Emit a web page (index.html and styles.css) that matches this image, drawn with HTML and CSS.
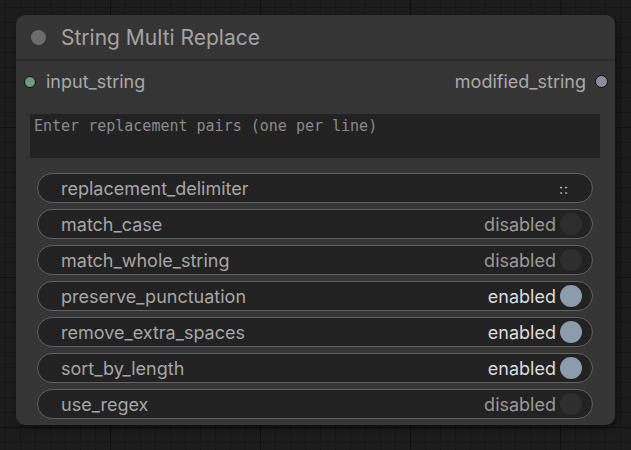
FILE: index.html
```html
<!DOCTYPE html>
<html lang="en">
<head>
  <meta charset="UTF-8">
  <title>String Multi Replace</title>
  <link rel="stylesheet" href="styles.css">
</head>
<body>
  <div class="node">
    <div class="node-title">
      <span class="title-dot"></span>
      <span class="title-text">String Multi Replace</span>
    </div>
    <div class="slots">
      <div class="slot slot-in">
        <span class="slot-dot in"></span>
        <span>input_string</span>
      </div>
      <div class="slot slot-out">
        <span>modified_string</span>
        <span class="slot-dot out"></span>
      </div>
    </div>
    <textarea class="pairs" placeholder="Enter replacement pairs (one per line)"></textarea>
    <div class="widgets">
      <div class="widget">
        <span class="label">replacement_delimiter</span>
        <span class="value text">::</span>
      </div>
      <div class="widget">
        <span class="label">match_case</span>
        <span class="value">disabled</span>
        <span class="knob"></span>
      </div>
      <div class="widget">
        <span class="label">match_whole_string</span>
        <span class="value">disabled</span>
        <span class="knob"></span>
      </div>
      <div class="widget on">
        <span class="label">preserve_punctuation</span>
        <span class="value">enabled</span>
        <span class="knob"></span>
      </div>
      <div class="widget on">
        <span class="label">remove_extra_spaces</span>
        <span class="value">enabled</span>
        <span class="knob"></span>
      </div>
      <div class="widget on">
        <span class="label">sort_by_length</span>
        <span class="value">enabled</span>
        <span class="knob"></span>
      </div>
      <div class="widget">
        <span class="label">use_regex</span>
        <span class="value">disabled</span>
        <span class="knob"></span>
      </div>
    </div>
  </div>
</body>
</html>
```

FILE: styles.css
```css
* {
  margin: 0;
  padding: 0;
  box-sizing: border-box;
}

body {
  width: 631px;
  height: 450px;
  overflow: hidden;
  font-family: Inter, "Noto Sans", sans-serif;
  background-color: #1c1c1c;
  background-image:
    linear-gradient(to right, #111 1px, transparent 1px),
    linear-gradient(to bottom, #111 1px, transparent 1px),
    linear-gradient(to right, #161616 1px, transparent 1px),
    linear-gradient(to bottom, #161616 1px, transparent 1px);
  background-size: 150px 150px, 150px 150px, 15px 15px, 15px 15px;
  background-position: 110px 0, 0 127px, 5px 0, 0 7px;
  padding: 15px 0 0 16px;
}

.node {
  width: 599px;
  height: 410px;
  background-color: #353535;
  border-radius: 9px;
  box-shadow: 2px 3px 6px rgba(0, 0, 0, 0.5);
}

.node-title {
  height: 46px;
  display: flex;
  align-items: center;
  padding-left: 15px;
  border-bottom: 2px solid #2b2b2b;
}

.title-dot {
  width: 15px;
  height: 15px;
  border-radius: 50%;
  background-color: #6c6c6c;
}

.title-text {
  margin-left: 15px;
  font-size: 21px;
  color: #a3a3a3;
}

.slots {
  height: 41px;
  display: flex;
  justify-content: space-between;
  align-items: center;
  padding: 0 7px 0 8px;
  font-size: 18px;
  color: #a9a9a9;
}

.slot {
  display: flex;
  align-items: center;
  gap: 10px;
}

.slot-out {
  gap: 9px;
}

.slot-dot {
  width: 12px;
  height: 12px;
  border-radius: 50%;
  border: 1.5px solid #111;
}

.slot-dot.in {
  background-color: #6f9a7d;
}

.slot-dot.out {
  width: 13px;
  height: 13px;
  background-color: #8e8c9c;
}

.pairs {
  display: block;
  width: 570px;
  height: 44px;
  margin: 12px 0 0 14px;
  background-color: #222;
  border: none;
  resize: none;
  outline: none;
  padding: 3px 4px;
  font-family: "DejaVu Sans Mono", monospace;
  font-size: 15px;
  color: #888;
}

.pairs::placeholder {
  color: #8a8a8a;
}

.widgets {
  margin: 15px 22px 0 21px;
  display: flex;
  flex-direction: column;
  gap: 6px;
}

.widget {
  height: 30px;
  display: flex;
  align-items: center;
  background-color: #222;
  border: 1.5px solid #626262;
  border-radius: 16px;
  padding: 0 10px 0 23px;
  font-size: 18px;
  color: #a6a6a6;
}

.label {
  flex: 1;
}

.value {
  color: #999;
}

.value.text {
  margin-right: 13px;
  color: #ccc;
  font-size: 14px;
  letter-spacing: 1px;
}

.knob {
  width: 22px;
  height: 22px;
  border-radius: 50%;
  background-color: #2e2e2e;
  margin-left: 4px;
}

.widget.on .value {
  color: #dcdcdc;
}

.widget.on .knob {
  background-color: #8c9cad;
}
```
